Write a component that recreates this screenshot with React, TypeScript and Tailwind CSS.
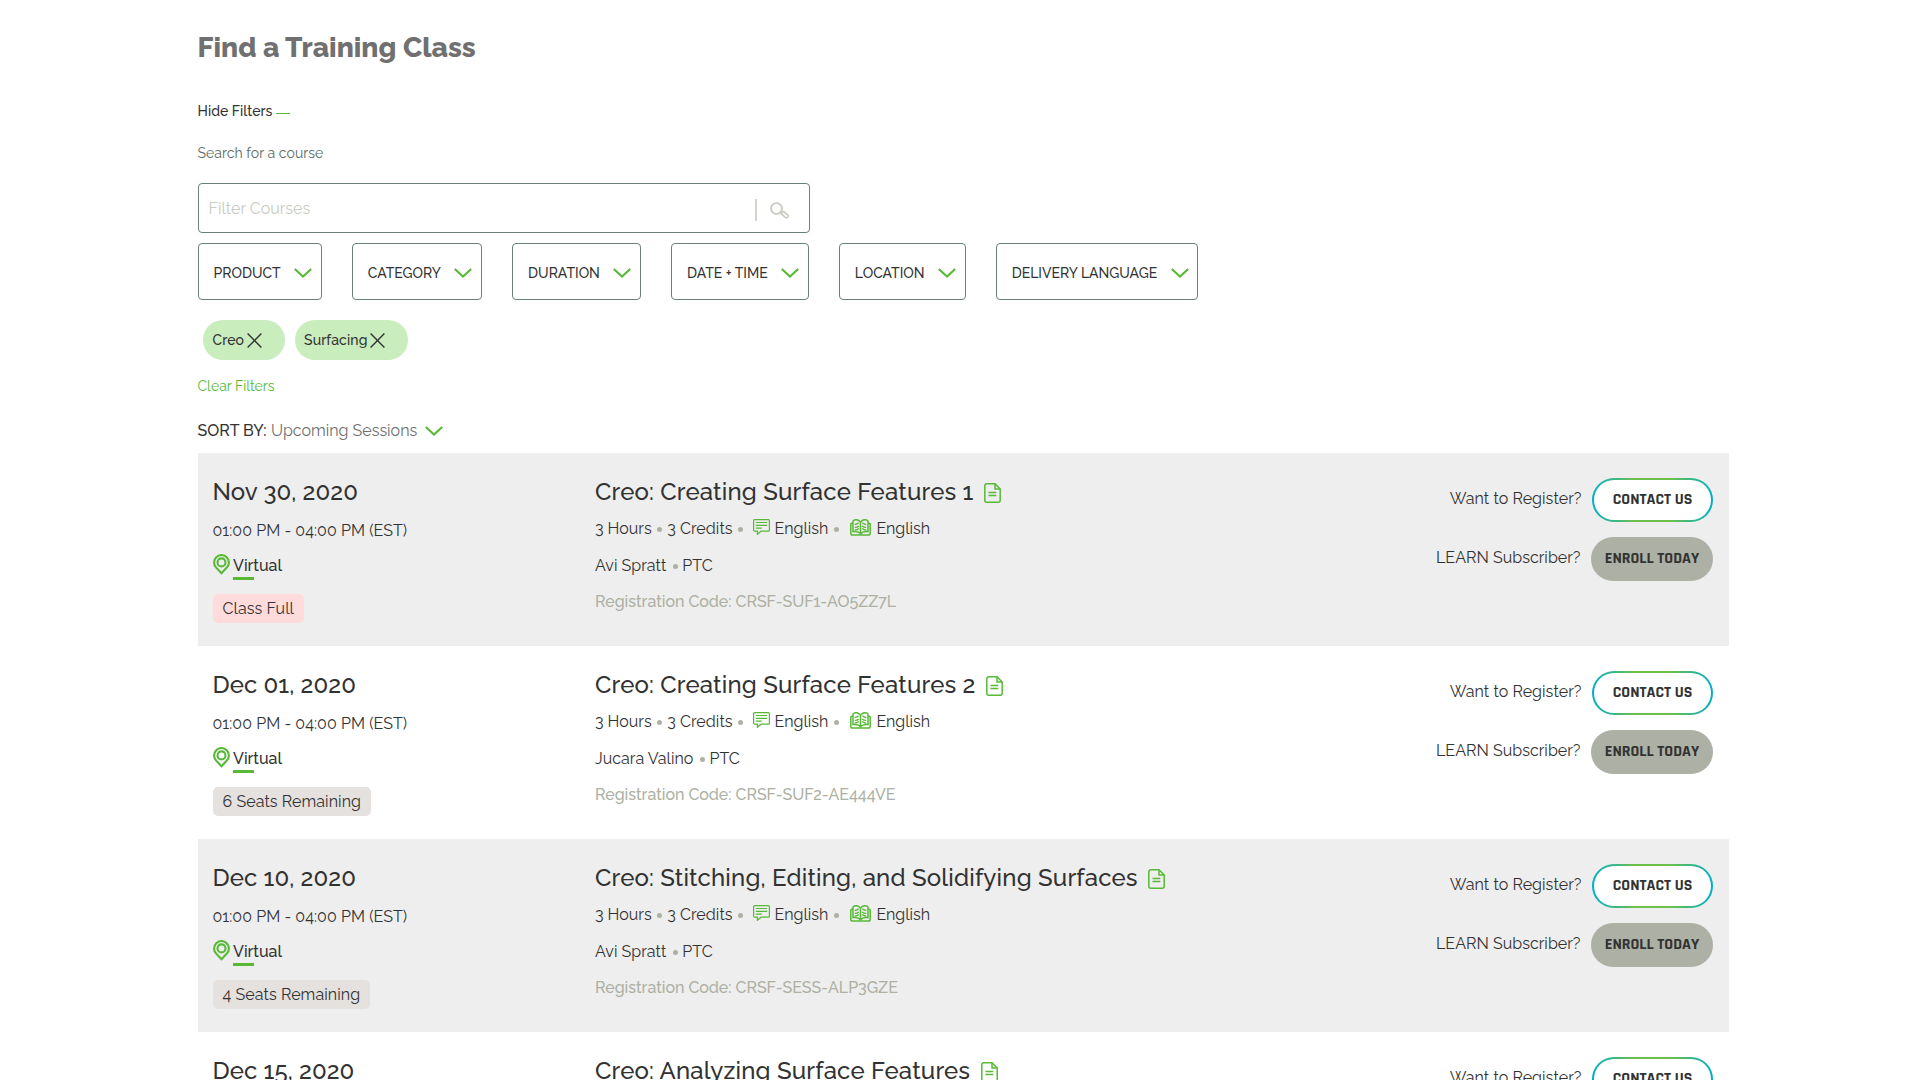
const filters = [
  'PRODUCT',
  'CATEGORY',
  'DURATION',
  'DATE + TIME',
  'LOCATION',
  'DELIVERY LANGUAGE',
];

const tags = ['Creo', 'Surfacing'];

const sessions = [
  {
    date: 'Nov 30, 2020',
    title: 'Creo: Creating Surface Features 1',
    teacher: 'Avi Spratt',
    code: 'CRSF-SUF1-AO5ZZ7L',
    seats: 'Class Full',
    full: true,
  },
  {
    date: 'Dec 01, 2020',
    title: 'Creo: Creating Surface Features 2',
    teacher: 'Jucara Valino',
    code: 'CRSF-SUF2-AE444VE',
    seats: '6 Seats Remaining',
    full: false,
  },
  {
    date: 'Dec 10, 2020',
    title: 'Creo: Stitching, Editing, and Solidifying Surfaces',
    teacher: 'Avi Spratt',
    code: 'CRSF-SESS-ALP3GZE',
    seats: '4 Seats Remaining',
    full: false,
  },
  {
    date: 'Dec 15, 2020',
    title: 'Creo: Analyzing Surface Features',
    teacher: 'Avi Spratt',
    code: 'CRSF-ASF1-AO5ZZ8L',
    seats: '6 Seats Remaining',
    full: false,
  },
];

const Chevron = () => (
  <svg width="18" height="10" viewBox="0 0 18 10" fill="none" stroke="#57b936" strokeWidth="2.1">
    <path d="M.8.9L9 8.5 17.2.9" />
  </svg>
);

const CloseIcon = () => (
  <svg width="15" height="15" viewBox="0 0 15 15" fill="none" stroke="#323232" strokeWidth="1.4">
    <path d="M.6.6l13.8 13.8M14.4.6L.6 14.4" />
  </svg>
);

const SearchIcon = () => (
  <svg width="19" height="17" viewBox="0 0 19 17" fill="none" stroke="#c9cbc1">
    <circle cx="6.5" cy="6.5" r="5.4" strokeWidth="1.9" />
    <path d="M10.5 10.2l1.6 1.4" strokeWidth="1.8" />
    <rect x="11" y="10.8" width="7.4" height="3.4" rx="1.5" strokeWidth="1.6" transform="rotate(42 14.5 12.6)" />
  </svg>
);

const PinIcon = () => (
  <svg width="17" height="21" viewBox="0 0 17 21" fill="none" stroke="#57b936" strokeWidth="2.1">
    <path d="M8.5 19.2L3.2 13.6a7.4 7.4 0 1 1 10.6 0z" />
    <circle cx="8.5" cy="8.4" r="4" />
  </svg>
);

const DocIcon = () => (
  <svg width="17" height="20" viewBox="0 0 17 20" fill="none" stroke="#57b936" strokeWidth="1.5">
    <path d="M11 .8H2.8a2 2 0 0 0-2 2v14.4a2 2 0 0 0 2 2h11.4a2 2 0 0 0 2-2V6z" />
    <path d="M11 .8V6h5.2M4.5 9.5h7.8M4.5 12.5h7.8" />
  </svg>
);

const ChatIcon = () => (
  <svg width="17" height="16" viewBox="0 0 17 16" fill="none" stroke="#57b936" strokeWidth="1.2">
    <path d="M1.6.6h13.8a1 1 0 0 1 1 1v9.6a1 1 0 0 1-1 1H8l-3.6 3.1v-3.1H1.6a1 1 0 0 1-1-1V1.6a1 1 0 0 1 1-1z" />
    <path d="M2.8 3.5h11.4M2.8 6.3h11.4M2.8 9.1h6" />
  </svg>
);

const BookIcon = () => (
  <svg width="21" height="17" viewBox="0 0 21 17" fill="none" stroke="#57b936" strokeWidth="1.5">
    <path d="M10.5 3.2C9.2 1.2 6.5.4 4.5.9 3.5 1.1 3 1.7 3 2.6v10c3-.5 6 .2 7.5 2.2 1.5-2 4.5-2.7 7.5-2.2v-10c0-.9-.5-1.5-1.5-1.7-2-.5-4.7.3-6 2.3zM10.5 3.2v11.6" />
    <path d="M3 4.3H1.8c-.7 0-1 .4-1 1v8.9c0 1.2.5 1.8 1.7 1.8h16c1.2 0 1.7-.6 1.7-1.8V5.3c0-.6-.3-1-1-1H18" />
    <path
      strokeWidth="1.3"
      d="M4.8 5.700c1.200-.4 2.500-.9 3.800-2M4.800 8.400c1.500.1 2.700-.3 4-1.400M4.800 11c1.500.1 2.700-.3 4-1.400M16.200 5.700c-1.200-.4-2.500-.9-3.800-2M16.200 8.400c-1.500.1-2.700-.3-4-1.400M16.200 11c-1.500.1-2.700-.3-4-1.400"
    />
  </svg>
);

const Dot = () => <span className="mt-px size-[5px] shrink-0 rounded-full bg-[#adb0a4]" />;

const Session = ({ item }: any) => {
  return (
    <li className="flex h-[193px] pl-[15px] pr-4 odd:bg-[#eeeeee]">
      <div className="w-[382.5px] pt-6">
        <h3 className="text-[24px] leading-[29px] font-medium tracking-[0.08px]">{item.date}</h3>
        <p className="mt-[13px] leading-6 tracking-[0.06px]">01:00 PM - 04:00 PM (EST)</p>
        <div className="mt-[11px] flex gap-[3.5px]">
          <PinIcon />
          <span className='leading-6 font-medium after:-mt-px after:block after:h-[3px] after:w-[21px] after:bg-[#57b936] after:content-[""]'>
            Virtual
          </span>
        </div>
        <span
          className={`mt-3.5 inline-block rounded-[5px] px-2.5 leading-[29px] tracking-[0.08px] ${
            item.full ? 'bg-[#ffdbdb]' : 'bg-[#e5e1de]'
          }`}
        >
          {item.seats}
        </span>
      </div>
      <div className="flex-1 pt-6">
        <div className="flex items-start gap-[10.5px]">
          <h3 className="text-[24px] leading-[29px] font-medium tracking-[0.17px]">{item.title}</h3>
          <span className="pt-1.5">
            <DocIcon />
          </span>
        </div>
        <div className="mt-[11px] flex items-center leading-6">
          <span className="mr-[5px]">3 Hours</span>
          <Dot />
          <span className="mx-[5.5px] tracking-[0.06px]">3 Credits</span>
          <Dot />
          <span className="mb-1 ml-[10px] mr-[4.5px]">
            <ChatIcon />
          </span>
          <span className="mr-[5.5px]">English</span>
          <Dot />
          <span className="mb-1 ml-[11px] mr-[5.5px]">
            <BookIcon />
          </span>
          English
        </div>
        <div className="mt-[13px] flex items-center leading-6">
          <span className="mr-[7px] tracking-[0.04px]">{item.teacher}</span>
          <Dot />
          <span className="ml-1">PTC</span>
        </div>
        <p className="mt-3 leading-6 font-[550] tracking-[-0.03px] text-[#adb0a4]">
          Registration Code: {item.code}
        </p>
      </div>
      <div className="flex flex-col items-end gap-[15px] pt-[25px]">
        <div className="flex items-center gap-2.5">
          <span className="pb-[3px] tracking-[0.06px]">Want to Register?</span>
          <button className="h-11 w-[121px] rounded-full bg-[linear-gradient(90deg,#00aec7,#6cc04a_35%,#6cc04a_65%,#00aec7)] p-0.5">
            <span className="flex h-10 items-center justify-center rounded-full bg-white pb-px pl-px font-['Rajdhani','Roboto',sans-serif] text-[16px] font-bold">
              CONTACT US
            </span>
          </button>
        </div>
        <div className="flex items-center gap-2.5">
          <span className="pb-[3px] tracking-[0.03px]">LEARN Subscriber?</span>
          <button className="h-11 w-[122px] rounded-full bg-[#adb0a4] pb-px pl-px font-['Rajdhani','Roboto',sans-serif] text-[16px] font-bold">
            ENROLL TODAY
          </button>
        </div>
      </div>
    </li>
  );
};

const App = () => {
  return (
    <main className="h-[1080px] overflow-hidden bg-white font-['Raleway','Lato',sans-serif] text-[16px] text-[#323232]">
      <div className="ml-[197.5px] w-[1531px] pt-[30px]">
        <h1 className="text-[28px] leading-9 font-extrabold text-[#707070]">Find a Training Class</h1>
        <button className="mt-[35px] flex items-center gap-[3.5px] text-sm leading-5 font-medium tracking-[0.03px]">
          Hide Filters
          <span className="mt-1 h-px w-3.5 bg-[#57b936]" />
        </button>
        <label className="mt-[22px] block text-sm leading-5 tracking-[0.06px] text-[#5a6b65]">
          Search for a course
        </label>
        <div className="mt-5 flex h-[50px] w-[612px] items-center rounded-[4px] border border-[#6a8078] pl-2.5 pr-5 text-[#c9cbc1]">
          <span className="flex-1 pt-0.5">Filter Courses</span>
          <span className="mt-[3px] mr-[13px] h-[22px] w-0.5 bg-[#d3d5cd]" />
          <span className="mt-1">
            <SearchIcon />
          </span>
        </div>
        <div className="mt-2.5 flex gap-[30.1px]">
          {filters.map((name) => (
            <button
              key={name}
              className="flex h-[57px] items-center gap-[13.5px] rounded-[4px] border border-[#6a8078] pl-[15px] pr-[8.5px] text-sm font-medium"
            >
              <span className="pt-0.5">{name}</span>
              <span className="pt-[3px]">
                <Chevron />
              </span>
            </button>
          ))}
        </div>
        <div className="mt-5 flex gap-2.5 pl-[5.5px]">
          {tags.map((tag) => (
            <span
              key={tag}
              className="flex h-10 items-center gap-[3px] rounded-full bg-[#c9edbd] pl-[9.5px] pr-[22.5px] text-sm font-medium tracking-[0.1px]"
            >
              {tag}
              <CloseIcon />
            </span>
          ))}
        </div>
        <a className="mt-4 block text-sm leading-5 text-[#57b936]">Clear Filters</a>
        <div className="mt-[23px] flex h-6 items-center leading-6">
          <span className="font-medium">SORT BY:</span>
          <span className="mr-[7.5px] ml-[4.5px] text-[#707070]">Upcoming Sessions</span>
          <Chevron />
        </div>
        <ul className="mt-2.5">
          {sessions.map((item) => (
            <Session key={item.date} item={item} />
          ))}
        </ul>
      </div>
    </main>
  );
};

export default App;
